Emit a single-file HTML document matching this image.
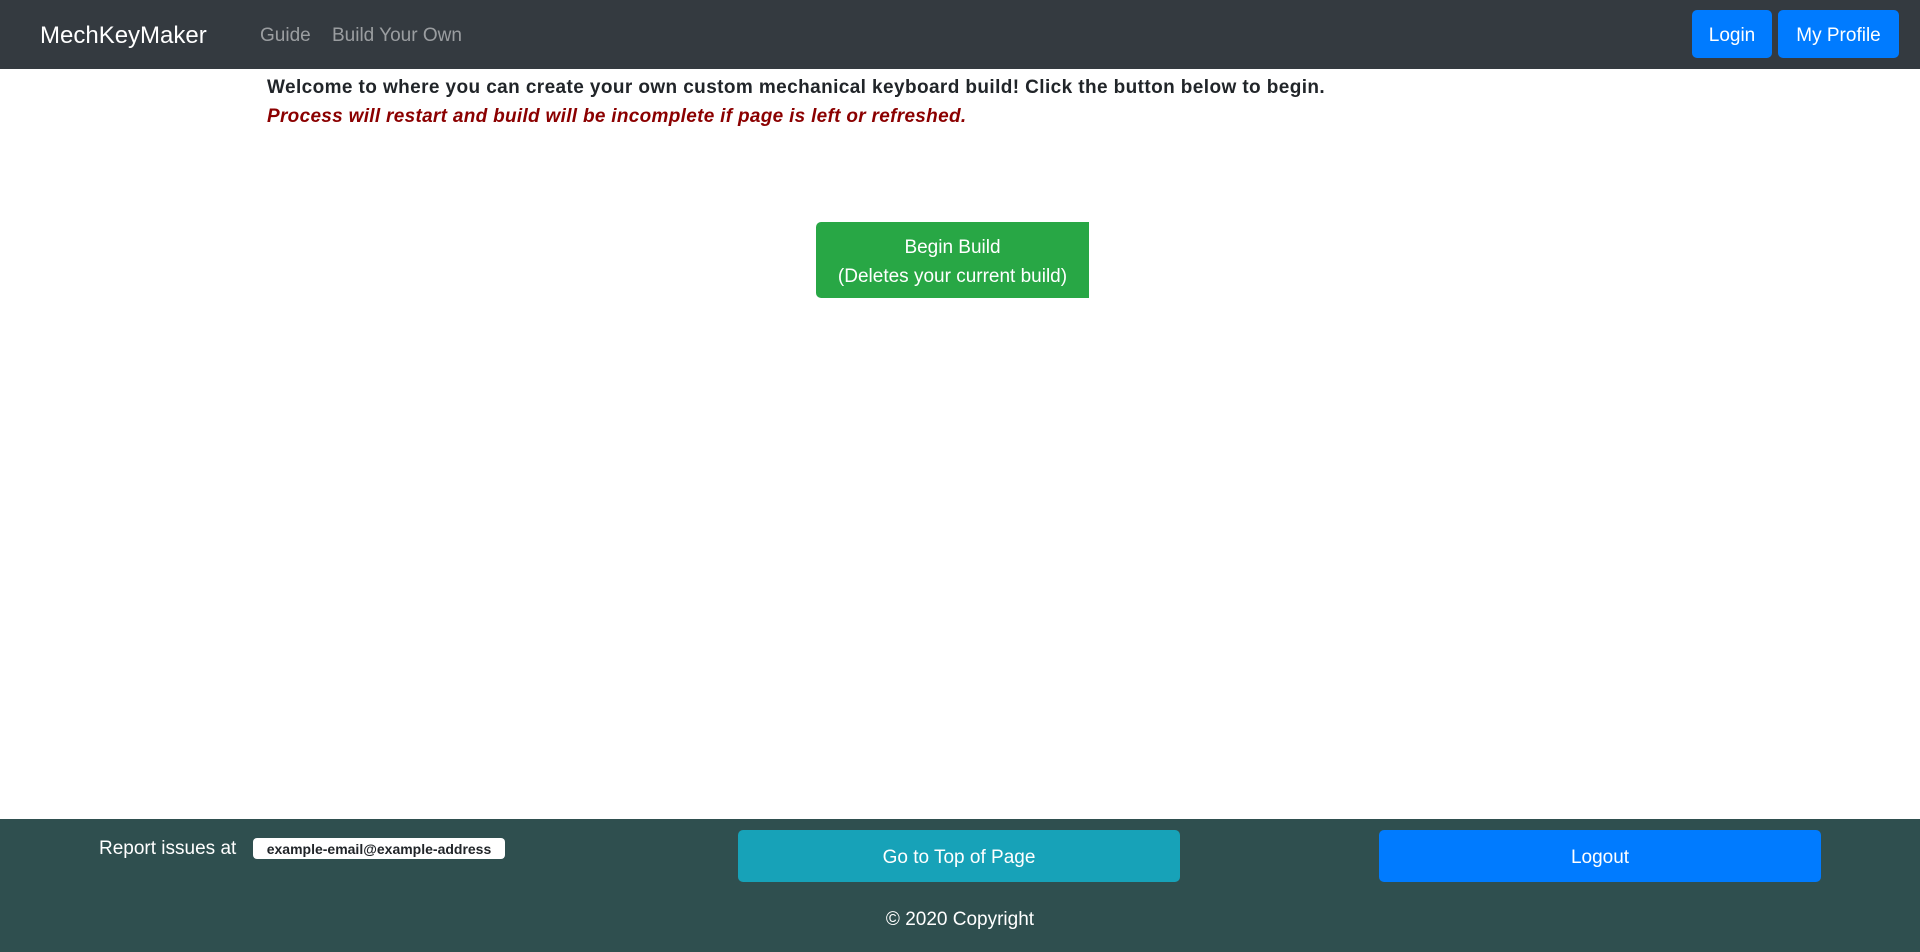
<!DOCTYPE html>
<html><head><meta charset="utf-8"><style>
*{box-sizing:border-box;margin:0;padding:0}
body{width:1920px;height:952px;overflow:hidden;font-family:"Liberation Sans",sans-serif;background:#fff;color:#212529;position:relative}
.nav{position:absolute;left:0;top:0;width:1920px;height:69px;background:#343a40}
.brand{position:absolute;left:40px;top:22px;font-size:24px;color:#fff}
.link{position:absolute;top:25px;font-size:19px;color:rgba(255,255,255,.5)}
.btn{position:absolute;background:#007bff;color:#fff;border-radius:5px;display:flex;align-items:center;justify-content:center;font-size:19px;padding-top:3px}
.t1{position:absolute;left:267px;top:77px;font-size:19px;font-weight:bold;letter-spacing:0.4px}
.t2{position:absolute;left:267px;top:106px;font-size:19px;font-weight:bold;font-style:italic;color:#8b0000;letter-spacing:0.3px}
.begin{position:absolute;left:816px;top:222px;width:273px;height:76px;background:#28a745;color:#fff;border-radius:5px 0 0 5px;font-size:19px;text-align:center;line-height:29px;padding-top:11px}
.foot{position:absolute;left:0;top:819px;width:1920px;height:133px;background:#2f4f4f;color:#fff}
</style></head><body>
<div class="nav">
<div class="brand">MechKeyMaker</div>
<div class="link" style="left:260px">Guide</div>
<div class="link" style="left:332px">Build Your Own</div>
<div class="btn" style="left:1692px;top:10px;width:80px;height:48px">Login</div>
<div class="btn" style="left:1778px;top:10px;width:121px;height:48px">My Profile</div>
</div>
<div class="t1">Welcome to where you can create your own custom mechanical keyboard build! Click the button below to begin.</div>
<div class="t2">Process will restart and build will be incomplete if page is left or refreshed.</div>
<div class="begin">Begin Build<br>(Deletes your current build)</div>
<div class="foot">
<div style="position:absolute;left:99px;top:19px;font-size:19px">Report issues at</div>
<div style="position:absolute;left:253px;top:19px;width:252px;height:21px;background:#fff;color:#212529;border-radius:4px;font-size:14px;font-weight:bold;text-align:center;line-height:22px">example-email@example-address</div>
<div class="btn" style="left:738px;top:11px;width:442px;height:52px;background:#17a2b8">Go to Top of Page</div>
<div class="btn" style="left:1379px;top:11px;width:442px;height:52px">Logout</div>
<div style="position:absolute;left:0;width:1920px;top:90px;text-align:center;font-size:19px">© 2020 Copyright</div>
</div>
</body></html>
